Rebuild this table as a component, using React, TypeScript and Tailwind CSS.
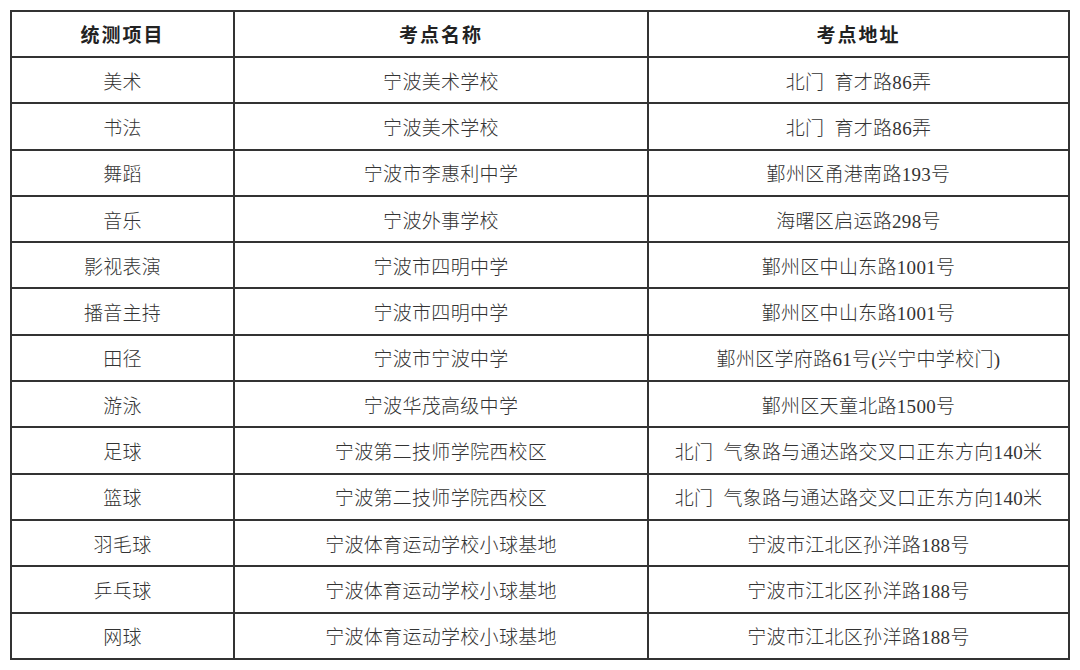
const ROWS = [
  ["美术", "宁波美术学校", "北门  育才路86弄"],
  ["书法", "宁波美术学校", "北门  育才路86弄"],
  ["舞蹈", "宁波市李惠利中学", "鄞州区甬港南路193号"],
  ["音乐", "宁波外事学校", "海曙区启运路298号"],
  ["影视表演", "宁波市四明中学", "鄞州区中山东路1001号"],
  ["播音主持", "宁波市四明中学", "鄞州区中山东路1001号"],
  ["田径", "宁波市宁波中学", "鄞州区学府路61号(兴宁中学校门)"],
  ["游泳", "宁波华茂高级中学", "鄞州区天童北路1500号"],
  ["足球", "宁波第二技师学院西校区", "北门  气象路与通达路交叉口正东方向140米"],
  ["篮球", "宁波第二技师学院西校区", "北门  气象路与通达路交叉口正东方向140米"],
  ["羽毛球", "宁波体育运动学校小球基地", "宁波市江北区孙洋路188号"],
  ["乒乓球", "宁波体育运动学校小球基地", "宁波市江北区孙洋路188号"],
  ["网球", "宁波体育运动学校小球基地", "宁波市江北区孙洋路188号"],
];

export default function App() {
  return (
    <div className="w-[1080px] h-[670px] bg-white pt-[10px] pl-[10px] font-['Liberation_Serif','Noto_Sans_CJK_SC',serif] text-[#333]">
      <table className="w-[1060px] border-collapse border-2 border-[#333] table-fixed">
        <colgroup>
          <col className="w-[223px]" />
          <col className="w-[414px]" />
          <col />
        </colgroup>
        <thead>
          <tr className="h-[46px]">
            {["统测项目", "考点名称", "考点地址"].map((h) => (
              <th key={h} className="border-2 border-[#333] pt-[3px] text-[19px] leading-none font-bold tracking-[2px] text-[#222] text-center">
                {h}
              </th>
            ))}
          </tr>
        </thead>
        <tbody>
          {ROWS.map((row, i) => (
            <tr key={i} className="h-[46.3px]">
              {row.map((cell, j) => (
                <td key={j} className="border-2 border-[#333] pt-[4px] text-[19px] leading-none font-light tracking-[0.3px] text-center whitespace-pre">
                  {cell}
                </td>
              ))}
            </tr>
          ))}
        </tbody>
      </table>
    </div>
  );
}
